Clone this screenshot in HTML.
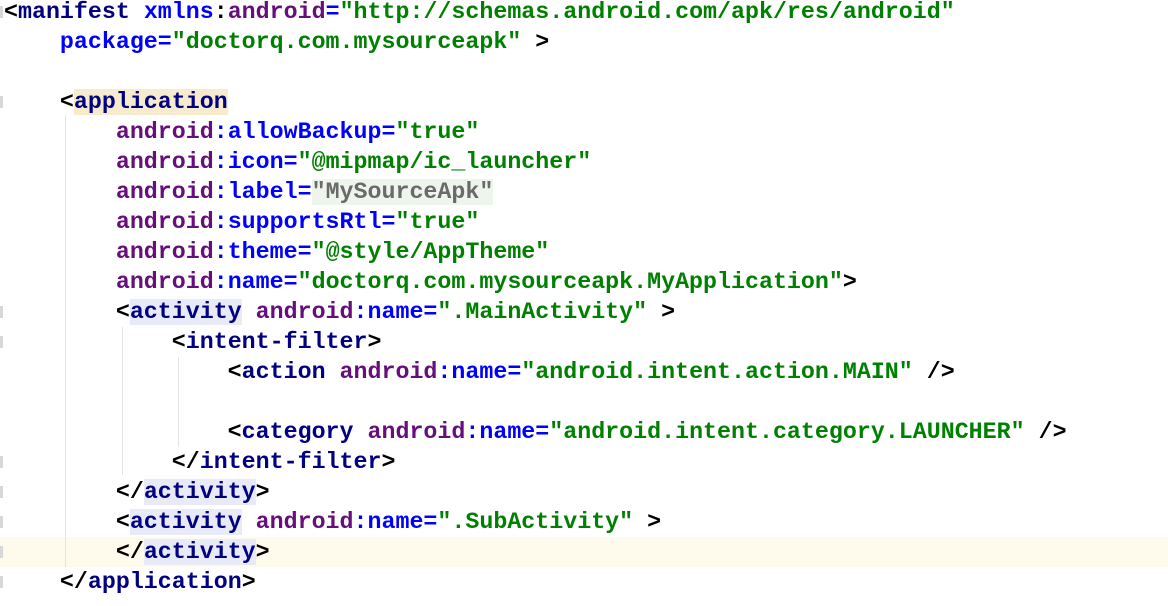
<!DOCTYPE html>
<html><head><meta charset="utf-8"><style>
html,body{margin:0;padding:0;background:#fff;width:1168px;height:606px;overflow:hidden;position:relative}
.l{position:absolute;left:4px;height:30px;line-height:30px;white-space:pre;font-family:"Liberation Mono",monospace;font-weight:bold;font-size:23.3px;color:#000}
.t{color:#000080}.a{color:#660e7a}.n{color:#0000ff}.v{color:#008000}
.g{position:absolute;width:1px;background:#e4e4e4}
.f{position:absolute;left:0;width:3px;height:12px;background:#d8d8d8}
.hl{background:#e8eaf8}
</style></head><body>
<div style="position:absolute;left:0;top:537px;width:1168px;height:30px;background:#fefbec"></div>
<div class="g" style="left:65px;top:115px;height:452px"></div>
<div class="g" style="left:122px;top:327px;height:148px"></div>
<div class="g" style="left:178px;top:357px;height:90px"></div>
<div class="f" style="top:6px"></div><div class="f" style="top:96px"></div>
<div class="f" style="top:306px"></div><div class="f" style="top:336px"></div>
<div class="f" style="top:456px"></div><div class="f" style="top:486px"></div>
<div class="f" style="top:516px"></div><div class="f" style="top:546px"></div><div class="f" style="top:576px"></div>
<div class="l" style="top:-3px">&lt;<span class="t">manifest</span> <span class="n">xmlns</span>:<span class="a">android</span><span class="n">=</span><span class="v">"http://schemas.android.com/apk/res/android"</span></div>
<div class="l" style="top:27px">    <span class="n">package=</span><span class="v">"doctorq.com.mysourceapk"</span> &gt;</div>
<div class="l" style="top:87px">    &lt;<span class="t" style="background:#f6ebcd">application</span></div>
<div class="l" style="top:117px">        <span class="a">android</span><span class="n">:allowBackup=</span><span class="v">"true"</span></div>
<div class="l" style="top:147px">        <span class="a">android</span><span class="n">:icon=</span><span class="v">"@mipmap/ic_launcher"</span></div>
<div class="l" style="top:177px">        <span class="a">android</span><span class="n">:label=</span><span style="color:#6a6a6a;background:#eef5ec">"MySourceApk"</span></div>
<div class="l" style="top:207px">        <span class="a">android</span><span class="n">:supportsRtl=</span><span class="v">"true"</span></div>
<div class="l" style="top:237px">        <span class="a">android</span><span class="n">:theme=</span><span class="v">"@style/AppTheme"</span></div>
<div class="l" style="top:267px">        <span class="a">android</span><span class="n">:name=</span><span class="v">"doctorq.com.mysourceapk.MyApplication"</span>&gt;</div>
<div class="l" style="top:297px">        &lt;<span class="t hl">activity</span> <span class="a">android</span><span class="n">:name=</span><span class="v">".MainActivity"</span> &gt;</div>
<div class="l" style="top:327px">            &lt;<span class="t">intent-filter</span>&gt;</div>
<div class="l" style="top:357px">                &lt;<span class="t">action</span> <span class="a">android</span><span class="n">:name=</span><span class="v">"android.intent.action.MAIN"</span> /&gt;</div>
<div class="l" style="top:417px">                &lt;<span class="t">category</span> <span class="a">android</span><span class="n">:name=</span><span class="v">"android.intent.category.LAUNCHER"</span> /&gt;</div>
<div class="l" style="top:447px">            &lt;/<span class="t">intent-filter</span>&gt;</div>
<div class="l" style="top:477px">        &lt;/<span class="t hl">activity</span>&gt;</div>
<div class="l" style="top:507px">        &lt;<span class="t hl">activity</span> <span class="a">android</span><span class="n">:name=</span><span class="v">".SubActivity"</span> &gt;</div>
<div class="l" style="top:537px">        &lt;/<span class="t hl">activity</span>&gt;</div>
<div class="l" style="top:567px">    &lt;/<span class="t">application</span>&gt;</div>
</body></html>
